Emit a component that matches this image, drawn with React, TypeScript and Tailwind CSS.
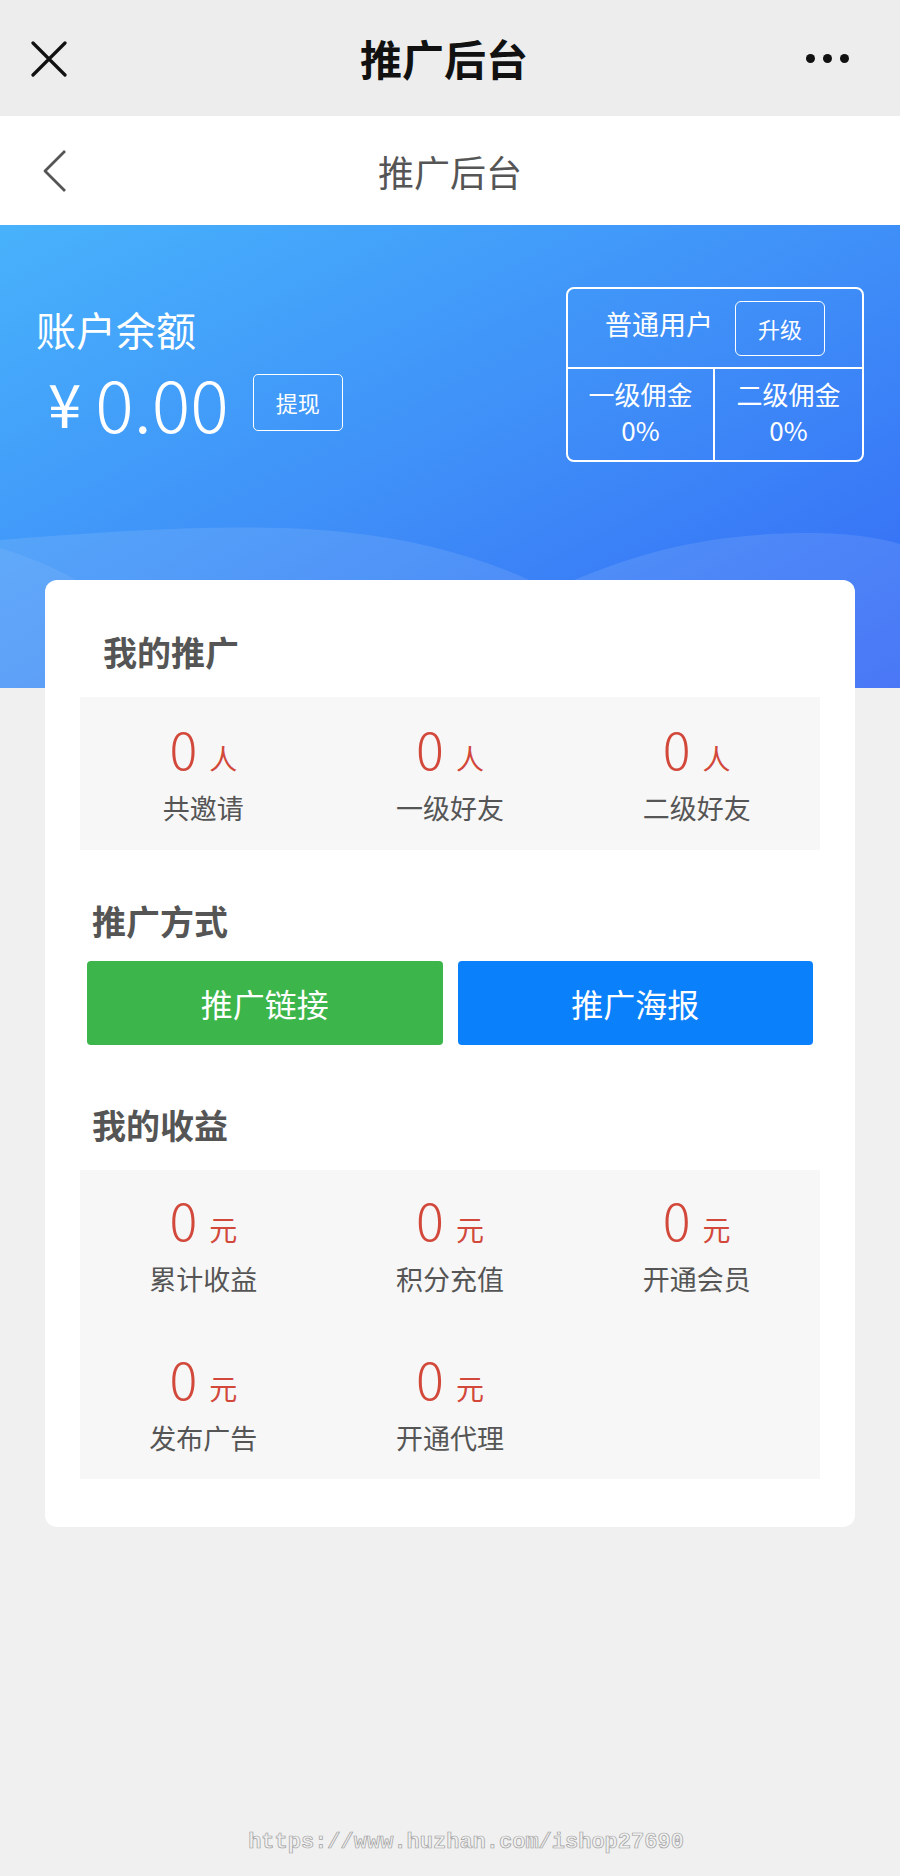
import React from 'react';

type Stat = { value: number; unit: string; label: string };

const invite: Stat[] = [
  { value: 0, unit: '人', label: '共邀请' },
  { value: 0, unit: '人', label: '一级好友' },
  { value: 0, unit: '人', label: '二级好友' },
];

const income: Stat[] = [
  { value: 0, unit: '元', label: '累计收益' },
  { value: 0, unit: '元', label: '积分充值' },
  { value: 0, unit: '元', label: '开通会员' },
  { value: 0, unit: '元', label: '发布广告' },
  { value: 0, unit: '元', label: '开通代理' },
];

const StatItem: React.FC<{ stat: Stat }> = ({ stat }) => (
  <div className="flex flex-col items-center">
    <div className="flex items-baseline h-[56px] leading-[56px] text-[#d2483b]">
      <span className="text-[52px] font-light">{stat.value}</span>
      <span className="ml-[12px] text-[28px]">{stat.unit}</span>
    </div>
    <div className="mt-[15px] text-[27px] leading-[34px] text-[#555]">{stat.label}</div>
  </div>
);

export default function App() {
  return (
    <div className="min-h-screen bg-[#f0f0f0] font-['Noto_Sans_CJK_SC',sans-serif]">
      {/* wechat top bar */}
      <div className="h-[116px] bg-[#ededed] flex items-center justify-between px-[31px]">
        <svg width="36" height="36" viewBox="0 0 36 36" className="mt-[2px]">
          <path d="M2 2 L34 34 M34 2 L2 34" stroke="#111" strokeWidth="3.2" strokeLinecap="round" />
        </svg>
        <div className="text-[42px] font-bold text-[#111] leading-none">推广后台</div>
        <div className="flex gap-[8px] w-[46px] mr-[17px] -ml-[15px]">
          <span className="w-[9px] h-[9px] rounded-full bg-[#111]" />
          <span className="w-[9px] h-[9px] rounded-full bg-[#111]" />
          <span className="w-[9px] h-[9px] rounded-full bg-[#111]" />
        </div>
      </div>

      {/* page nav bar */}
      <div className="h-[109px] bg-white flex items-center px-[42px]">
        <svg width="26" height="44" viewBox="0 0 26 44" className="shrink-0">
          <polyline points="23,2 3,22 23,42" fill="none" stroke="#555" strokeWidth="2.8" strokeLinejoin="round" />
        </svg>
        <div className="flex-1 text-center text-[36px] text-[#555] leading-none pr-[26px]">推广后台</div>
      </div>

      {/* blue header */}
      <div className="relative h-[463px] overflow-hidden bg-gradient-to-br from-[#48b2fb] via-[#3f8ff8] to-[#3668f5]">
        <svg className="absolute left-0 bottom-0" width="900" height="180" viewBox="0 0 900 180" preserveAspectRatio="none">
          <path d="M0 32 C120 22 250 14 344 24 C440 34 520 60 600 110 C640 140 660 170 670 180 L0 180 Z" fill="#ffffff" fillOpacity="0.1" />
          <path d="M574 72 C650 40 720 25 810 25 C850 25 880 30 900 36 L900 180 L574 180 Z" fill="#ffffff" fillOpacity="0.1" />
          <path d="M0 40 C50 55 100 80 140 120 L140 180 L0 180 Z" fill="#ffffff" fillOpacity="0.07" />
        </svg>
        <div className="relative flex justify-between px-[36px] pt-[62px] text-white">
          <div className="pt-[19px]">
            <div className="text-[40px] leading-[46px]">账户余额</div>
            <div className="mt-[14px] ml-[12px] flex items-center">
              <span className="text-[60px] leading-none">¥</span>
              <span className="ml-[14px] text-[72px] font-light leading-none">0.00</span>
              <button className="ml-[24px] w-[90px] h-[57px] border border-white rounded-[5px] text-[22px]">提现</button>
            </div>
          </div>
          <div className="w-[298px] h-[175px] border-2 border-white rounded-[8px] flex flex-col">
            <div className="h-[80px] flex items-center justify-center gap-[22px] border-b-2 border-white">
              <span className="text-[27px] mb-[8px]">普通用户</span>
              <button className="w-[90px] h-[55px] border-[1.5px] border-white rounded-[6px] text-[22px]">升级</button>
            </div>
            <div className="flex-1 grid grid-cols-2">
              <div className="flex flex-col items-center justify-center pb-[5px] border-r-2 border-white text-[26px] leading-[36px]">
                <span>一级佣金</span>
                <span>0%</span>
              </div>
              <div className="flex flex-col items-center justify-center pb-[5px] text-[26px] leading-[36px]">
                <span>二级佣金</span>
                <span>0%</span>
              </div>
            </div>
          </div>
        </div>
      </div>

      {/* card */}
      <div className="relative mx-[45px] -mt-[108px] bg-white rounded-[12px] px-[35px] pt-[52px] pb-[48px]">
        <div className="ml-[23px] text-[34px] font-bold leading-[40px] text-[#555]">我的推广</div>
        <div className="mt-[25px] bg-[#f7f7f7] grid grid-cols-3 pt-[23px] pb-[25px]">
          {invite.map((s) => (
            <StatItem key={s.label} stat={s} />
          ))}
        </div>

        <div className="mt-[51px] ml-[12px] text-[34px] font-bold leading-[40px] text-[#555]">推广方式</div>
        <div className="mt-[20px] mx-[7px] grid grid-cols-2 gap-[15px]">
          <button className="h-[84px] rounded-[4px] bg-[#3cb54b] text-white text-[32px]">推广链接</button>
          <button className="h-[84px] rounded-[4px] bg-[#0a80fa] text-white text-[32px]">推广海报</button>
        </div>

        <div className="mt-[60px] ml-[12px] text-[34px] font-bold leading-[40px] text-[#555]">我的收益</div>
        <div className="mt-[25px] bg-[#f7f7f7] grid grid-cols-3 gap-y-[54px] pt-[21px] pb-[24px]">
          {income.map((s) => (
            <StatItem key={s.label} stat={s} />
          ))}
        </div>
      </div>

      {/* watermark */}
      <div className="mt-[301px] flex justify-center pl-[32px] pb-[18px]">
        <span className="font-['Liberation_Mono',monospace] font-bold text-[22px] leading-[30px] text-transparent [-webkit-text-stroke:0.7px_#a0a0a0]">
          https://www.huzhan.com/ishop27690
        </span>
      </div>
    </div>
  );
}
